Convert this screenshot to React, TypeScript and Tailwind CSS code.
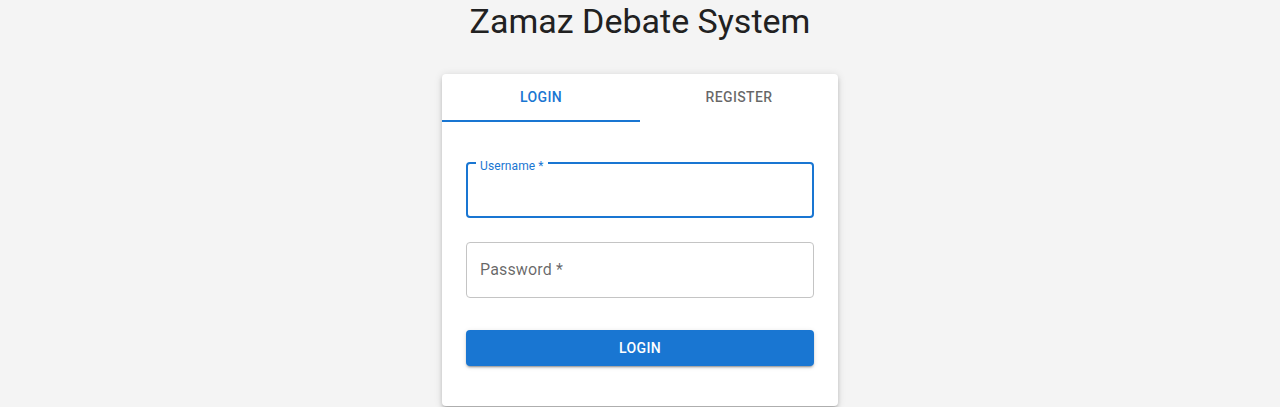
import React from "react";

export default function App() {
  return (
    <div
      className="min-h-[407px] bg-[#f4f4f4] flex flex-col items-center"
      style={{ fontFamily: "Roboto, 'Liberation Sans', sans-serif" }}
    >
      <h1 className="text-[34px] leading-[42px] tracking-[0px] text-[#212121] font-normal m-0">
        Zamaz Debate System
      </h1>
      <div className="mt-8 w-[396px] bg-white rounded-[4px] shadow-[0px_3px_3px_-2px_rgba(0,0,0,0.2),0px_3px_4px_0px_rgba(0,0,0,0.14),0px_1px_8px_0px_rgba(0,0,0,0.12)]">
        <div className="flex h-12">
          <button className="relative flex-1 flex items-center justify-center pb-[2px] text-[14px] font-medium tracking-[0.4px] uppercase text-[#1976d2]">
            Login
            <span className="absolute left-0 right-0 bottom-0 h-[2px] bg-[#1976d2]" />
          </button>
          <button className="flex-1 flex items-center justify-center pb-[2px] text-[14px] font-medium tracking-[0.4px] uppercase text-[rgba(0,0,0,0.6)]">
            Register
          </button>
        </div>
        <div className="px-6 pt-6 pb-10 flex flex-col">
          <div className="relative mt-4 mb-2 h-14 rounded-[4px] border-2 border-[#1976d2]">
            <label className="absolute left-[8px] -top-[5px] px-[4px] bg-white text-[12px] leading-[14px] tracking-[0.1px] text-[#1976d2]">
              Username *
            </label>
          </div>
          <div className="relative mt-4 mb-2 h-14 rounded-[4px] border border-[#c4c4c4] flex items-center">
            <span className="pl-[13px] pb-[2px] text-[16px] leading-[23px] tracking-[0.15px] text-[rgba(0,0,0,0.6)]">
              Password *
            </span>
          </div>
          <button className="mt-6 h-9 rounded-[4px] bg-[#1976d2] text-white text-[14px] font-medium tracking-[0.4px] uppercase shadow-[0px_3px_1px_-2px_rgba(0,0,0,0.2),0px_2px_2px_0px_rgba(0,0,0,0.14),0px_1px_5px_0px_rgba(0,0,0,0.12)]">
            Login
          </button>
        </div>
      </div>
    </div>
  );
}
